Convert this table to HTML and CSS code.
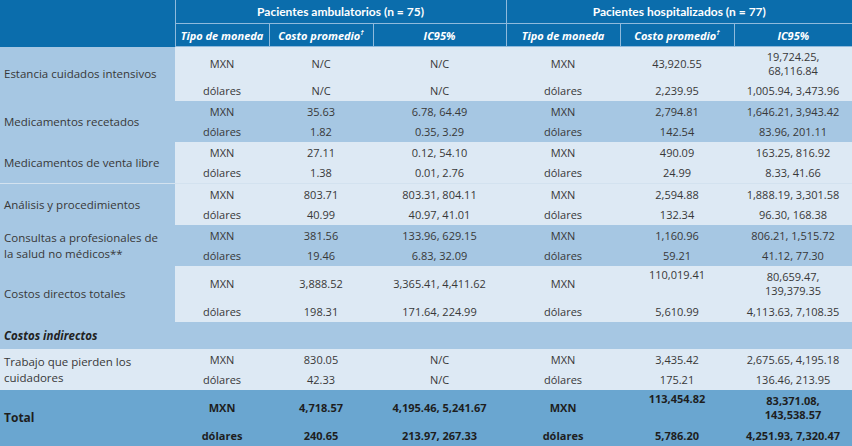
FILE: index.html
```html
<!DOCTYPE html>
<html lang="es">
<head>
<meta charset="utf-8">
<title>Costos</title>
<link rel="stylesheet" href="styles.css">
</head>
<body>
<table class="costs">
  <colgroup>
    <col class="c-label"><col class="c-cur"><col class="c-avg"><col class="c-ci">
    <col class="c-cur2"><col class="c-avg2"><col class="c-ci2">
  </colgroup>
  <thead>
    <tr class="h1">
      <th rowspan="2" class="blank"></th>
      <th colspan="3">Pacientes ambulatorios (n = 75)</th>
      <th colspan="3">Pacientes hospitalizados (n = 77)</th>
    </tr>
    <tr class="h2">
      <th>Tipo de moneda</th>
      <th>Costo promedio<sup>†</sup></th>
      <th>IC95%</th>
      <th>Tipo de moneda</th>
      <th>Costo promedio<sup>†</sup></th>
      <th>IC95%</th>
    </tr>
  </thead>
  <tbody>
    <tr class="light tall">
      <td rowspan="2" class="label">Estancia cuidados intensivos</td>
      <td>MXN</td><td>N/C</td><td>N/C</td><td>MXN</td><td>43,920.55</td><td>19,724.25,<br>68,116.84</td>
    </tr>
    <tr class="light short">
      <td>dólares</td><td>N/C</td><td>N/C</td><td>dólares</td><td>2,239.95</td><td>1,005.94, 3,473.96</td>
    </tr>

    <tr class="mid r1">
      <td rowspan="2" class="label">Medicamentos recetados</td>
      <td>MXN</td><td>35.63</td><td>6.78, 64.49</td><td>MXN</td><td>2,794.81</td><td>1,646.21, 3,943.42</td>
    </tr>
    <tr class="mid r2">
      <td>dólares</td><td>1.82</td><td>0.35, 3.29</td><td>dólares</td><td>142.54</td><td>83.96, 201.11</td>
    </tr>

    <tr class="light r1">
      <td rowspan="2" class="label">Medicamentos de venta libre</td>
      <td>MXN</td><td>27.11</td><td>0.12, 54.10</td><td>MXN</td><td>490.09</td><td>163.25, 816.92</td>
    </tr>
    <tr class="light r2">
      <td>dólares</td><td>1.38</td><td>0.01, 2.76</td><td>dólares</td><td>24.99</td><td>8.33, 41.66</td>
    </tr>

    <tr class="light r1 sep">
      <td rowspan="2" class="label">Análisis y procedimientos</td>
      <td>MXN</td><td>803.71</td><td>803.31, 804.11</td><td>MXN</td><td>2,594.88</td><td>1,888.19, 3,301.58</td>
    </tr>
    <tr class="light r2">
      <td>dólares</td><td>40.99</td><td>40.97, 41.01</td><td>dólares</td><td>132.34</td><td>96.30, 168.38</td>
    </tr>

    <tr class="mid r1">
      <td rowspan="2" class="label">Consultas a profesionales de la salud no médicos**</td>
      <td>MXN</td><td>381.56</td><td>133.96, 629.15</td><td>MXN</td><td>1,160.96</td><td>806.21, 1,515.72</td>
    </tr>
    <tr class="mid r2">
      <td>dólares</td><td>19.46</td><td>6.83, 32.09</td><td>dólares</td><td>59.21</td><td>41.12, 77.30</td>
    </tr>

    <tr class="light tall">
      <td rowspan="2" class="label">Costos directos totales</td>
      <td>MXN</td><td>3,888.52</td><td>3,365.41, 4,411.62</td><td>MXN</td><td class="top">110,019.41</td><td>80,659.47,<br>139,379.35</td>
    </tr>
    <tr class="light short">
      <td>dólares</td><td>198.31</td><td>171.64, 224.99</td><td>dólares</td><td>5,610.99</td><td>4,113.63, 7,108.35</td>
    </tr>

    <tr class="mid section">
      <td colspan="7" class="label section-label">Costos indirectos</td>
    </tr>

    <tr class="light r1">
      <td rowspan="2" class="label label-light">Trabajo que pierden los cuidadores</td>
      <td>MXN</td><td>830.05</td><td>N/C</td><td>MXN</td><td>3,435.42</td><td>2,675.65, 4,195.18</td>
    </tr>
    <tr class="light r2">
      <td>dólares</td><td>42.33</td><td>N/C</td><td>dólares</td><td>175.21</td><td>136.46, 213.95</td>
    </tr>

    <tr class="total tall">
      <td rowspan="2" class="label label-total">Total</td>
      <td>MXN</td><td>4,718.57</td><td>4,195.46, 5,241.67</td><td>MXN</td><td class="top">113,454.82</td><td>83,371.08,<br>143,538.57</td>
    </tr>
    <tr class="total short">
      <td>dólares</td><td>240.65</td><td>213.97, 267.33</td><td>dólares</td><td>5,786.20</td><td>4,251.93, 7,320.47</td>
    </tr>
  </tbody>
</table>
</body>
</html>
```

FILE: styles.css
```css
html, body {
  margin: 0;
  padding: 0;
  background: #ffffff;
}

body {
  font-family: "Open Sans", "Liberation Sans", sans-serif;
  color: #383838;
}

.costs {
  border-collapse: collapse;
  table-layout: fixed;
  width: 852px;
  font-size: 11px;
}

.c-label { width: 175px; }
.c-cur { width: 94px; }
.c-avg { width: 104px; }
.c-ci { width: 133px; }
.c-cur2 { width: 114px; }
.c-avg2 { width: 114px; }
.c-ci2 { width: 118px; }

.costs th {
  background: #0b6dac;
  color: #ffffff;
  font-weight: 700;
  padding: 0 3px;
  border: 1px solid #8fbadc;
  white-space: nowrap;
}

.costs thead tr:first-child th {
  border-top: none;
}

.costs th.blank {
  border-left: none;
  border-bottom: none;
}

.costs th:last-child {
  border-right: none;
}

.h1 th {
  height: 23px;
  font-family: "Lato", "Open Sans", sans-serif;
  font-size: 12px;
}

.h2 th {
  height: 22px;
  font-style: italic;
  font-size: 11px;
}

.costs sup {
  font-size: 7px;
  vertical-align: 5px;
  line-height: 0;
}

.costs td {
  padding: 0 3px;
  text-align: center;
  vertical-align: middle;
  line-height: 14px;
}

.light td { background: #dde9f4; }
.mid td { background: #a6c7e3; }
.total td {
  background: #6aa6d0;
  font-weight: 700;
  color: #1e1e1e;
}

.costs td.label {
  background: #a6c7e3;
  text-align: left;
  padding-left: 4px;
  padding-right: 6px;
  line-height: 16px;
  font-size: 11.5px;
}

.costs td.label-light { background: #dde9f4; }
.costs td.label-total {
  background: #6aa6d0;
  font-size: 12px;
}

.costs td.section-label {
  font-weight: 700;
  font-style: italic;
  color: #222;
}

.costs td.top {
  vertical-align: top;
  padding-top: 2px;
}

.tall td { height: 33px; }
.short td { height: 21px; }
.r1 td { height: 21px; }
.r2 td { height: 20px; }
.section td { height: 27px; }

.sep td { border-top: 1px solid #d3e2ef; }
```
